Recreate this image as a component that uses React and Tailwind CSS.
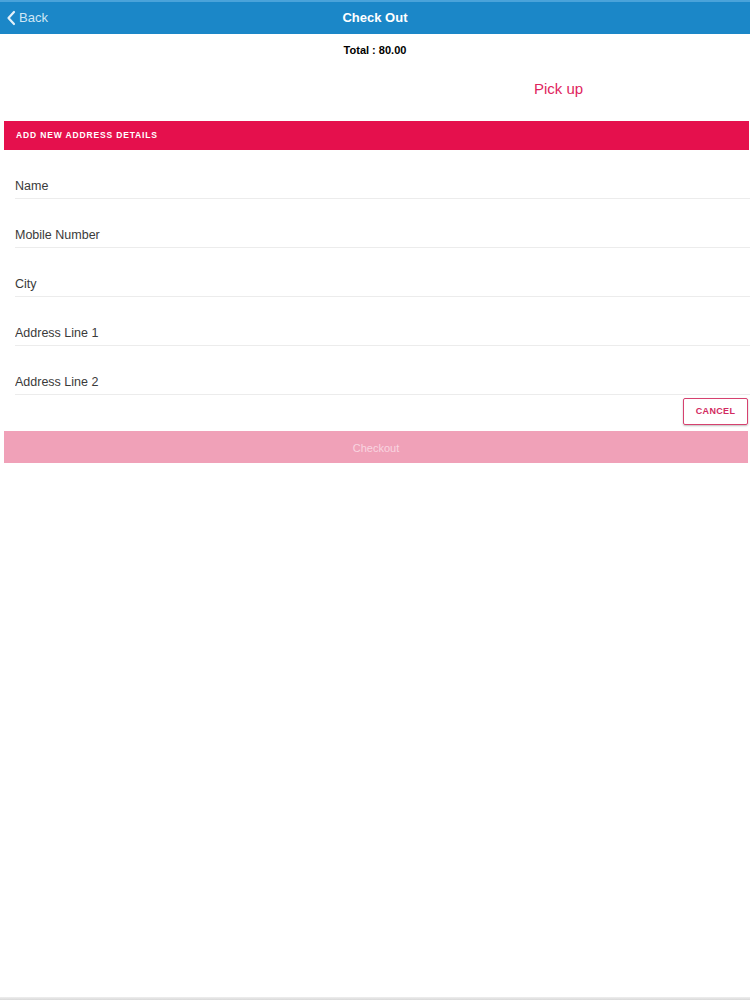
import React, { useState } from "react";

const fields = ["Name", "Mobile Number", "City", "Address Line 1", "Address Line 2"];

export default function App() {
  const [values, setValues] = useState({});

  return (
    <div
      className="h-[1000px] flex flex-col bg-white text-[#333]"
      style={{ fontFamily: '"Liberation Sans", Arial, sans-serif' }}
    >
      {/* Nav bar */}
      <div className="relative h-[34px] bg-[#1b87c8] border-t-2 border-[#4aa3da] flex items-center justify-center">
        <button className="absolute left-[6px] top-0 h-full flex items-center gap-[3px] text-[#cfe6f5] text-[13px]">
          <svg width="10" height="16" viewBox="0 0 10 16" fill="none">
            <path d="M8 2L2.5 8L8 14" stroke="#e3f1fa" strokeWidth="2.2" strokeLinecap="round" strokeLinejoin="round" />
          </svg>
          Back
        </button>
        <h1 className="text-white text-[13px] font-bold">Check Out</h1>
      </div>

      {/* Total */}
      <div className="h-[32px] flex items-center justify-center">
        <p className="text-[11px] font-bold text-black">Total : 80.00</p>
      </div>

      {/* Delivery option */}
      <div className="h-[44px] grid grid-cols-2">
        <div />
        <div className="flex items-center justify-center pr-[8px] pt-[3px]">
          <span className="text-[15px] text-[#e0245e]">Pick up</span>
        </div>
      </div>

      {/* Section header */}
      <div className="mt-[11px] ml-[4px] mr-[1px] h-[29px] bg-[#e5104d] flex items-center px-[12px]">
        <span className="text-white text-[8.5px] font-bold tracking-[0.1em]">ADD NEW ADDRESS DETAILS</span>
      </div>

      {/* Fields */}
      <div className="ml-[15px]">
        {fields.map((f) => (
          <div key={f} className="h-[49px] border-b border-[#ececec] flex items-end pb-[2px]">
            <input
              value={values[f] || ""}
              onChange={(e) => setValues({ ...values, [f]: e.target.value })}
              placeholder={f}
              className="w-full bg-transparent outline-none text-[12.5px] text-[#333] placeholder:text-[#3a3a3a]"
            />
          </div>
        ))}
      </div>

      {/* Cancel */}
      <div className="flex justify-end mt-[3px] mr-[2px]">
        <button className="h-[27px] w-[65px] border border-[#d6416f] rounded-[2px] shadow-[0_1px_2px_rgba(0,0,0,0.25)] text-[#d22a60] text-[9px] font-bold tracking-[0.04em]">
          CANCEL
        </button>
      </div>

      {/* Checkout */}
      <button className="mt-[6px] ml-[4px] mr-[2px] h-[32px] pt-[3px] bg-[#f0a1b8] text-[#f9d5e0] text-[11px]">
        Checkout
      </button>

      <div className="flex-1" />
      <div className="h-[3px] bg-gradient-to-b from-[#eeeeee] to-[#d9d9d9]" />
    </div>
  );
}
